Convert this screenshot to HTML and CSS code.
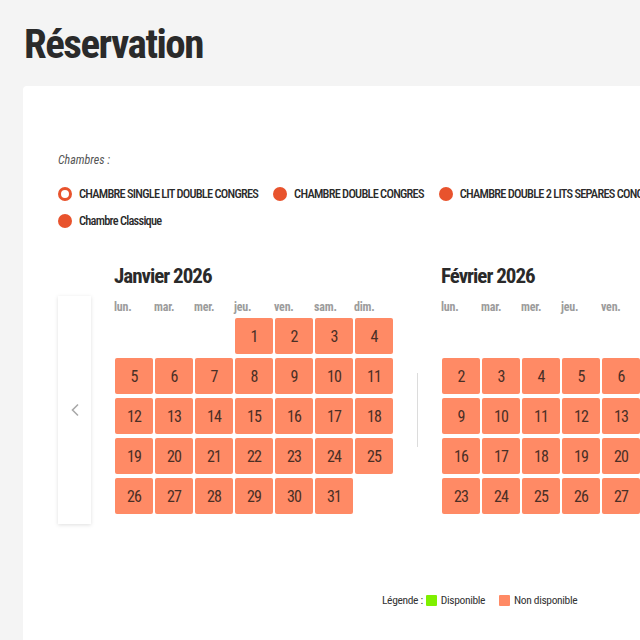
FILE: index.html
```html
<!DOCTYPE html>
<html lang="fr">
<head>
<meta charset="utf-8">
<title>Réservation</title>
<link rel="stylesheet" href="styles.css">
</head>
<body>
<h1 class="page-title">Réservation</h1>
<section class="card">
  <p class="rooms-label">Chambres :</p>
  <div class="rooms">
    <div class="room-row">
      <span class="room"><span class="dot dot-outline"></span>CHAMBRE SINGLE LIT DOUBLE CONGRES</span>
      <span class="room"><span class="dot"></span>CHAMBRE DOUBLE CONGRES</span>
      <span class="room"><span class="dot"></span>CHAMBRE DOUBLE 2 LITS SEPARES CONGRES</span>
    </div>
    <div class="room-row">
      <span class="room"><span class="dot"></span>Chambre Classique</span>
    </div>
  </div>

  <div class="calendar">
    <button class="nav-prev" aria-label="Mois précédent">
      <svg width="10" height="14" viewBox="0 0 10 14"><polyline points="8,1.5 2.5,7 8,12.5" fill="none" stroke="#a9a9a9" stroke-width="1.6"/></svg>
    </button>

    <div class="month">
      <h2 class="month-title">Janvier 2026</h2>
      <div class="grid weekdays">
        <span>lun.</span><span>mar.</span><span>mer.</span><span>jeu.</span><span>ven.</span><span>sam.</span><span>dim.</span>
      </div>
      <div class="grid days">
        <span class="empty"></span><span class="empty"></span><span class="empty"></span>
        <span class="day">1</span><span class="day">2</span><span class="day">3</span><span class="day">4</span>
        <span class="day">5</span><span class="day">6</span><span class="day">7</span><span class="day">8</span><span class="day">9</span><span class="day">10</span><span class="day">11</span>
        <span class="day">12</span><span class="day">13</span><span class="day">14</span><span class="day">15</span><span class="day">16</span><span class="day">17</span><span class="day">18</span>
        <span class="day">19</span><span class="day">20</span><span class="day">21</span><span class="day">22</span><span class="day">23</span><span class="day">24</span><span class="day">25</span>
        <span class="day">26</span><span class="day">27</span><span class="day">28</span><span class="day">29</span><span class="day">30</span><span class="day">31</span>
      </div>
    </div>

    <div class="separator"></div>

    <div class="month">
      <h2 class="month-title">Février 2026</h2>
      <div class="grid weekdays">
        <span>lun.</span><span>mar.</span><span>mer.</span><span>jeu.</span><span>ven.</span><span>sam.</span><span>dim.</span>
      </div>
      <div class="grid days">
        <span class="empty"></span><span class="empty"></span><span class="empty"></span><span class="empty"></span><span class="empty"></span><span class="empty"></span>
        <span class="day">1</span>
        <span class="day">2</span><span class="day">3</span><span class="day">4</span><span class="day">5</span><span class="day">6</span><span class="day">7</span><span class="day">8</span>
        <span class="day">9</span><span class="day">10</span><span class="day">11</span><span class="day">12</span><span class="day">13</span><span class="day">14</span><span class="day">15</span>
        <span class="day">16</span><span class="day">17</span><span class="day">18</span><span class="day">19</span><span class="day">20</span><span class="day">21</span><span class="day">22</span>
        <span class="day">23</span><span class="day">24</span><span class="day">25</span><span class="day">26</span><span class="day">27</span><span class="day">28</span>
      </div>
    </div>
  </div>

  <div class="legend">
    <span class="legend-label">Légende :</span>
    <span class="legend-item"><span class="swatch swatch-free"></span>Disponible</span>
    <span class="legend-item"><span class="swatch swatch-busy"></span>Non disponible</span>
  </div>
</section>
</body>
</html>
```
FILE: styles.css
```css
html, body {
  margin: 0;
  height: 100%;
  overflow: hidden;
}
body {
  background: #f4f4f4;
  font-family: "Roboto Condensed", "Open Sans", "Liberation Sans", sans-serif;
  color: #2b2b2b;
}
.page-title {
  margin: 0;
  padding: 24px 24px 0;
  height: 40px;
  font-size: 41px;
  line-height: 40px;
  font-weight: 700;
  letter-spacing: -1.5px;
  color: #2a2a2a;
}
.card {
  box-sizing: border-box;
  margin: 22px 0 0 23px;
  background: #fff;
  border-radius: 4px 0 0 0;
  height: 554px;
  padding: 66px 0 0 35px;
  overflow: hidden;
}
.rooms-label {
  margin: 0;
  font-size: 12px;
  line-height: 16px;
  font-style: italic;
  color: #555;
}
.rooms {
  margin-top: 16px;
  display: flex;
  flex-direction: column;
  gap: 7px;
}
.room-row {
  display: flex;
  gap: 15px;
  white-space: nowrap;
}
.room {
  display: flex;
  align-items: center;
  gap: 7px;
  font-size: 12.4px;
  line-height: 20px;
  font-weight: 500;
  letter-spacing: -0.75px;
  color: #2a2a2a;
}
.dot {
  flex: none;
  width: 14px;
  height: 14px;
  border-radius: 50%;
  background: #e8532d;
  box-sizing: border-box;
}
.dot-outline {
  background: #fff;
  border: 3px solid #e8532d;
}
.calendar {
  margin-top: 33px;
  display: flex;
  align-items: flex-start;
  white-space: nowrap;
}
.nav-prev {
  flex: none;
  margin: 32px 24px 0 0;
  width: 33px;
  height: 228px;
  padding: 0;
  border: none;
  background: #fff;
  box-shadow: 0 1px 4px rgba(0, 0, 0, 0.13);
  display: flex;
  align-items: center;
  justify-content: center;
}
.month {
  flex: none;
  width: 278px;
}
.month-title {
  margin: 0 0 0 -1px;
  font-size: 21px;
  line-height: 24px;
  font-weight: 700;
  letter-spacing: -1px;
  color: #2a2a2a;
}
.grid {
  display: grid;
  grid-template-columns: repeat(7, 38px);
  column-gap: 2px;
}
.weekdays {
  margin-top: 11px;
  font-size: 12px;
  line-height: 16px;
  font-weight: 700;
  color: #9c9c9c;
  letter-spacing: -0.2px;
}
.weekdays span {
  margin-left: -1px;
}
.days {
  margin-top: 3px;
  row-gap: 4px;
}
.day {
  height: 36px;
  border-radius: 2px;
  background: #ff8a65;
  display: flex;
  align-items: center;
  justify-content: center;
  font-size: 16px;
  font-weight: 400;
  letter-spacing: -1px;
  color: #4a2f25;
}
.separator {
  flex: none;
  margin: 109px 24px 0;
  width: 1px;
  height: 74px;
  background: #dcdcdc;
}
.legend {
  margin: 68px 0 0 324px;
  display: flex;
  align-items: center;
  gap: 14px;
  font-size: 11.5px;
  line-height: 16px;
  letter-spacing: -0.35px;
  color: #333;
  white-space: nowrap;
}
.legend-label {
  margin-right: -11px;
}
.legend-item {
  display: flex;
  align-items: center;
  gap: 4px;
}
.swatch {
  width: 11px;
  height: 11px;
  border-radius: 1px;
}
.swatch-free {
  background: #7ff000;
}
.swatch-busy {
  background: #ff8a65;
}
```
